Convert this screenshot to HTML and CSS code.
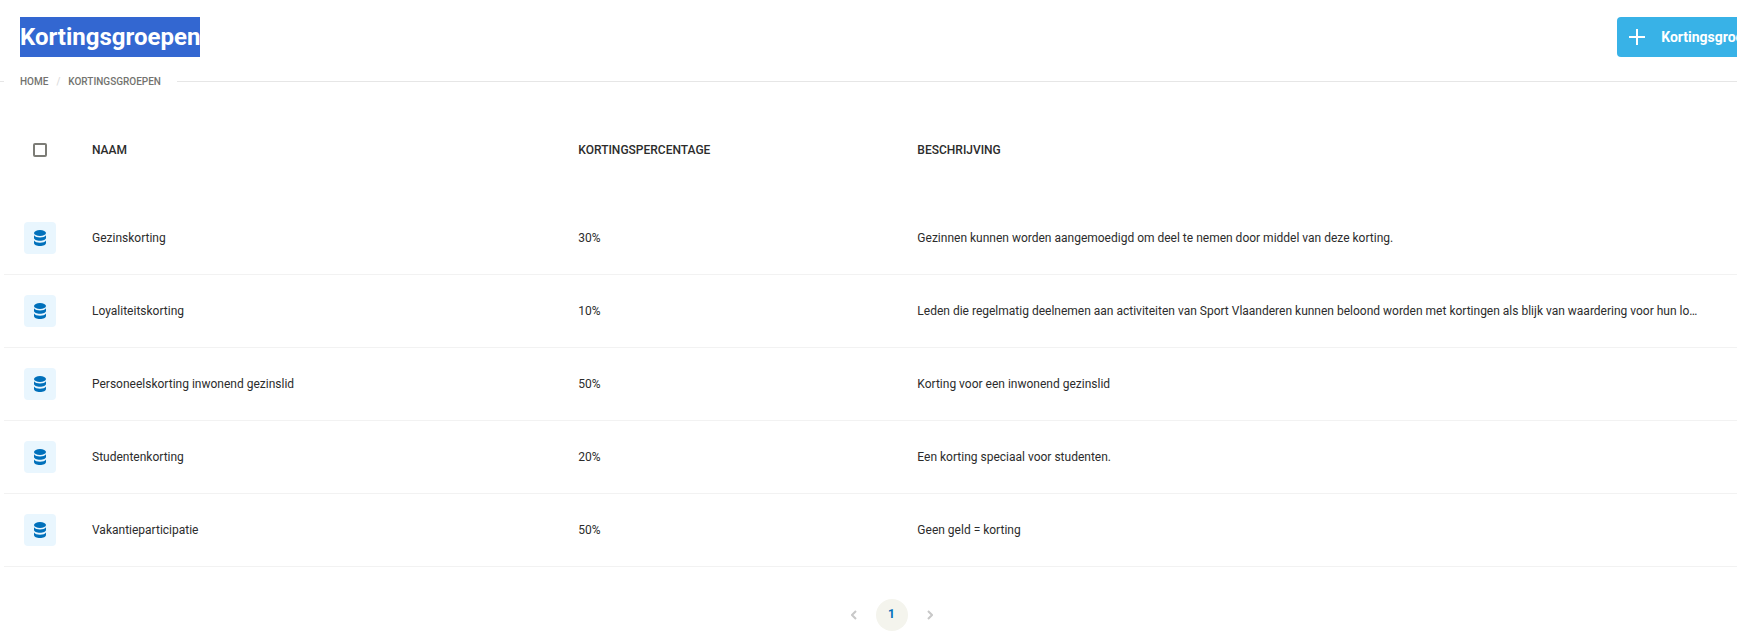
FILE: index.html
```html
<!DOCTYPE html>
<html lang="nl">
<head>
<meta charset="utf-8">
<title>Kortingsgroepen</title>
<link rel="stylesheet" href="styles.css">
</head>
<body>
<svg class="sprite" aria-hidden="true">
  <symbol id="database" viewBox="0 0 12 16">
    <ellipse cx="6" cy="3" rx="6" ry="3"/>
    <path d="M0 5.2C1 6.7 3.300 7.400 6 7.400S11 6.700 12 5.200V8C12 9.600 9.300 10.700 6 10.700S0 9.600 0 8Z"/>
    <path d="M0 10.500C1 12 3.300 12.700 6 12.700S11 12 12 10.500V13C12 14.700 9.300 16 6 16S0 14.700 0 13Z"/>
  </symbol>
</svg>
<div class="page">
  <header class="header">
    <h1 class="title"><span class="selected">Kortingsgroepen</span></h1>
    <button class="add" type="button">
      <svg class="plus" viewBox="0 0 16 16" aria-hidden="true"><path d="M8 0V16M0 8H16"/></svg>
      <span>Kortingsgroep</span>
    </button>
  </header>
  <nav class="crumbs" aria-label="Kruimelpad">
    <a class="crumb" href="#">Home</a>
    <span class="slash">/</span>
    <a class="crumb" href="#">Kortingsgroepen</a>
  </nav>
  <main class="content">
    <table class="table">
      <colgroup><col class="col-icon"><col class="col-name"><col class="col-percent"><col class="col-text"><col></colgroup>
      <thead>
        <tr>
          <th class="icon-cell"><input class="check" type="checkbox" aria-label="Alles selecteren"></th>
          <th>Naam</th><th>Kortingspercentage</th><th>Beschrijving</th><th></th>
        </tr>
      </thead>
      <tbody>
        <tr>
          <td class="icon-cell"><span class="tile"><svg class="db"><use href="#database"/></svg></span></td>
          <td>Gezinskorting</td><td>30%</td><td>Gezinnen kunnen worden aangemoedigd om deel te nemen door middel van deze korting.</td><td></td>
        </tr>
        <tr>
          <td class="icon-cell"><span class="tile"><svg class="db"><use href="#database"/></svg></span></td>
          <td>Loyaliteitskorting</td><td>10%</td><td>Leden die regelmatig deelnemen aan activiteiten van Sport Vlaanderen kunnen beloond worden met kortingen als blijk van waardering voor hun loyaliteit.</td><td></td>
        </tr>
        <tr>
          <td class="icon-cell"><span class="tile"><svg class="db"><use href="#database"/></svg></span></td>
          <td>Personeelskorting inwonend gezinslid</td><td>50%</td><td>Korting voor een inwonend gezinslid</td><td></td>
        </tr>
        <tr>
          <td class="icon-cell"><span class="tile"><svg class="db"><use href="#database"/></svg></span></td>
          <td>Studentenkorting</td><td>20%</td><td>Een korting speciaal voor studenten.</td><td></td>
        </tr>
        <tr>
          <td class="icon-cell"><span class="tile"><svg class="db"><use href="#database"/></svg></span></td>
          <td>Vakantieparticipatie</td><td>50%</td><td>Geen geld = korting</td><td></td>
        </tr>
      </tbody>
    </table>
    <nav class="pager" aria-label="Paginering">
      <button class="step" type="button" aria-label="Vorige"><svg class="chevron" viewBox="0 0 6 10"><path d="M5 1L1 5L5 9"/></svg></button>
      <button class="current" type="button">1</button>
      <button class="step" type="button" aria-label="Volgende"><svg class="chevron" viewBox="0 0 6 10"><path d="M1 1L5 5L1 9"/></svg></button>
    </nav>
  </main>
</div>
</body>
</html>
```
FILE: styles.css
```css
* { box-sizing: border-box; }
html { overflow: hidden; }
body {
  margin: 0;
  background: #fff;
  color: #2c2c2c;
  font-family: Roboto, "Liberation Sans", sans-serif;
  font-size: 12px;
  line-height: 16px;
}
.sprite { display: none; }
/* The page runs past the right edge of the window. */
.page { width: calc(100% + 46px); }
.header {
  display: flex;
  justify-content: space-between;
  padding: 17px 20px 16px;
}
.title { margin: 0; font-size: 24px; line-height: 40px; font-weight: 700; }
.selected { display: block; background: #3367d1; color: #fff; }
.add {
  display: flex;
  align-items: center;
  gap: 16px;
  height: 40px;
  padding: 0 12px;
  border: 0;
  border-radius: 4px;
  background: #38b2e7;
  color: #fff;
  font: 700 14px/20px Roboto, "Liberation Sans", sans-serif;
}
.plus { width: 16px; height: 16px; fill: none; stroke: #fff; stroke-width: 2; }
.crumbs {
  display: flex;
  align-items: center;
  gap: 8px;
  font-size: 10px;
  line-height: 17px;
  font-weight: 500;
  text-transform: uppercase;
}
.crumbs::before, .crumbs::after { content: ""; height: 1px; background: #e6e6e6; }
.crumbs::before { width: 4px; margin-right: 8px; }
.crumbs::after { flex: 1; margin-left: 8px; }
.crumb { color: #73736f; text-decoration: none; }
.slash { color: #dcdcdc; }
.content { padding: 8px 4px 0; }
.table { width: 100%; border-collapse: separate; border-spacing: 0; table-layout: fixed; }
.col-icon { width: 64px; }
.col-name { width: 27.4%; }
.col-percent { width: 19.1%; }
.col-text { width: 46.9%; }
.table th, .table td {
  padding: 0 24px;
  text-align: left;
  white-space: nowrap;
  overflow: hidden;
  text-overflow: ellipsis;
}
.table th { height: 104px; font-weight: 500; text-transform: uppercase; }
.table td { height: 73px; border-bottom: 1px solid #f2f2f2; }
.table .icon-cell { padding: 0 0 0 20px; }
.check {
  display: block;
  appearance: none;
  width: 14px;
  height: 14px;
  margin: 0 9px;
  border: 2px solid #7c7c76;
  border-radius: 2px;
  background: #fff;
}
.tile {
  display: grid;
  place-items: center;
  width: 32px;
  height: 32px;
  border-radius: 4px;
  background: #e9f6fe;
}
.db { width: 12px; height: 16px; fill: #0070bb; }
.pager { display: flex; justify-content: center; gap: 12px; padding-top: 32px; }
.step, .current { display: grid; place-items: center; height: 32px; padding: 0; border: 0; }
.step { width: 20px; background: none; }
.current {
  width: 32px;
  padding-bottom: 2px;
  border-radius: 50%;
  background: #f4f4ed;
  color: #0070bb;
  font: 700 12px/16px Roboto, "Liberation Sans", sans-serif;
}
.chevron { width: 6px; height: 10px; fill: none; stroke: #c8c8c8; stroke-width: 2; }
```
